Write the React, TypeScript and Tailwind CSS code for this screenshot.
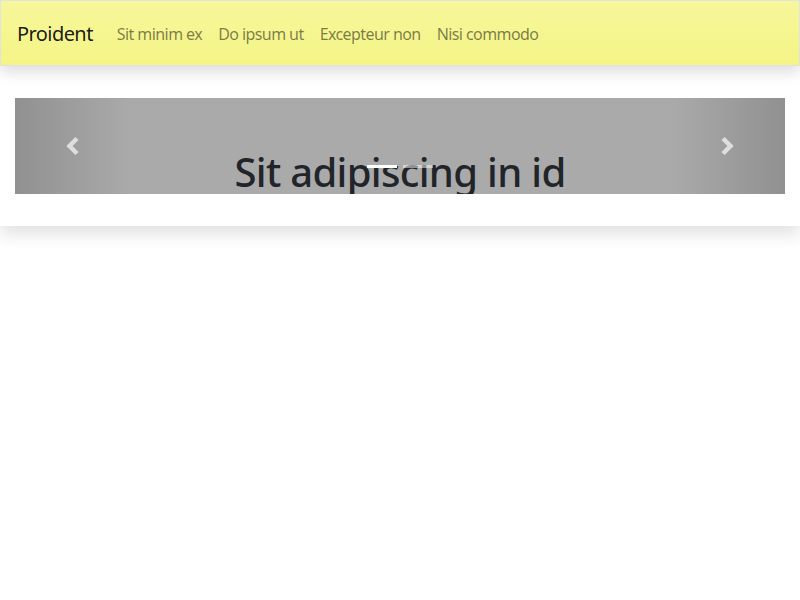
const links = ['Sit minim ex', 'Do ipsum ut', 'Excepteur non', 'Nisi commodo']

// Blocky chevron like the old glyph icons
const Chevron = ({ dir }: { dir: 'left' | 'right' }) => (
  <svg width="14" height="20" viewBox="0 0 14 20" className="text-[#dedede]">
    <polyline
      points={dir === 'left' ? '11,2.5 3.5,10 11,17.5' : '3,2.5 10.5,10 3,17.5'}
      fill="none"
      stroke="currentColor"
      strokeWidth="4.5"
      strokeLinejoin="miter"
    />
  </svg>
)

const Navbar = () => (
  <nav className="relative z-20 flex h-[66px] items-center border border-[#e2e2e2] bg-gradient-to-b from-[#f7f79b] to-[#f4f486] px-4 pt-[2px] tracking-[-0.036em] shadow-[0_6px_14px_rgba(0,0,0,0.14)]">
    <a className="mr-4 text-[20px] text-black/90">Proident</a>
    <ul className="flex">
      {links.map((l) => (
        <li key={l}>
          <a className="block px-2 text-[16px] text-black/50">{l}</a>
        </li>
      ))}
    </ul>
  </nav>
)

const Carousel = () => (
  <div className="relative h-24 overflow-hidden bg-[#aaaaaa]">
    {/* caption sits low, clipped by the slide */}
    <div className="absolute inset-x-0 top-[50px] z-10 text-center text-[40px] leading-[48px] font-medium tracking-[-0.017em] text-[#212529]">
      Sit adipiscing in id
    </div>
    <div className="absolute inset-y-0 left-0 z-10 flex w-[15%] items-center justify-center bg-gradient-to-r from-black/15 to-transparent">
      <Chevron dir="left" />
    </div>
    <div className="absolute inset-y-0 right-0 z-10 flex w-[15%] items-center justify-center bg-gradient-to-l from-black/15 to-transparent">
      <Chevron dir="right" />
    </div>
    <ol className="absolute inset-x-0 top-[67px] z-20 flex justify-center">
      <li className="mx-[3px] h-[3px] w-[30px] bg-white" />
      <li className="mx-[3px] h-[3px] w-[30px] bg-white/50" />
    </ol>
  </div>
)

export default function App() {
  return (
    <div className="min-h-[600px] bg-white font-['Segoe_UI','Noto_Sans',sans-serif]">
      <Navbar />
      <section className="relative z-10 bg-white px-[15px] py-8 shadow-[0_8px_16px_rgba(0,0,0,0.12)]">
        <Carousel />
      </section>
    </div>
  )
}
